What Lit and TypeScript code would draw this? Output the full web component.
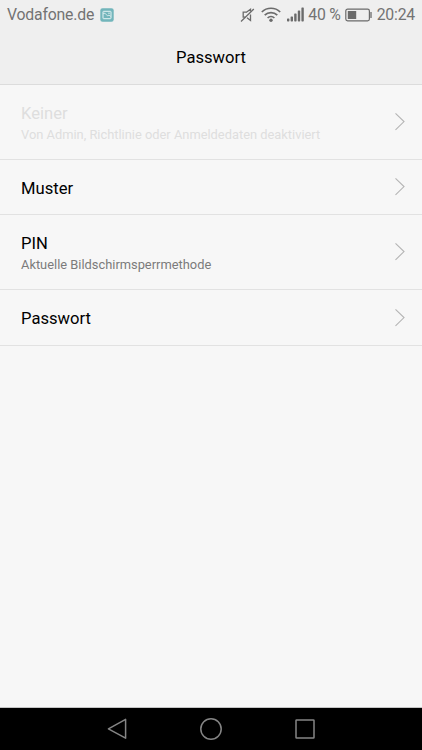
import { LitElement, html, css, svg, nothing } from "lit";
import { customElement, property } from "lit/decorators.js";

@customElement("status-bar")
class StatusBar extends LitElement {
  static styles = css`
    :host { display: flex; height: 29px; align-items: center; padding: 0 7px; box-sizing: border-box; color: #737373; font-size: 15.8px; letter-spacing: -0.2px; line-height: 29px; }
    svg { display: block; flex: none; }
    .shot { margin-left: 6px; }
    .grow { flex: 1; }
    .wifi { margin-left: 6px; }
    .signal { margin-left: 6px; }
    .percent { margin-left: 4px; }
    .battery { margin: 0 5px 0 4px; }
  `;
  render() {
    return html`
      <span>Vodafone.de</span>
      <svg class="shot" width="14" height="14" viewBox="0 0 14 14">
        <rect x=".3" y=".3" width="13.4" height="13.4" rx="2.2" fill="#72b5bb" />
        <rect x="3" y="3.3" width="8" height="7.4" rx=".6" fill="none" stroke="#e4f3f4" stroke-width="1" />
        <path d="M3.2 5.6 5 5.2 7.4 7.8 9 7.2l1.8 1.2" fill="none" stroke="#e4f3f4" stroke-width=".8" />
        <circle cx="9" cy="5.2" r=".7" fill="#e4f3f4" />
      </svg>
      <div class="grow"></div>
      <svg width="15" height="16" viewBox="0 0 15 16" fill="none" stroke="#6b6b6b" stroke-width="1.3">
        <path d="M6.6 5.2H3.2v5h2.2M6 5.5l4.5-3.2v2.2M10.5 7.5v6L7 10.7" />
        <path d="M13.8 2 1 14.5" />
      </svg>
      <svg class="wifi" width="20" height="16" viewBox="0 0 20 16" fill="none" stroke="#6b6b6b" stroke-width="1.7">
        <path d="M.8 5a13.2 13.2 0 0 1 18.4 0M3.7 8.1a9 9 0 0 1 12.6 0M6.6 11a4.9 4.9 0 0 1 6.8 0" />
        <circle cx="10" cy="13.3" r="1.7" fill="#6b6b6b" stroke="none" />
      </svg>
      <svg class="signal" width="17" height="16" viewBox="0 0 17 16" fill="#6b6b6b">
        <rect x="0" y="11.4" width="2.4" height="3" rx=".7" />
        <rect x="3.6" y="9.4" width="2.4" height="5" rx=".7" />
        <rect x="7.2" y="6.4" width="2.4" height="8" rx=".7" />
        <rect x="10.8" y="3.4" width="2.4" height="11" rx=".7" />
        <rect x="14.4" y=".4" width="2.4" height="14" rx=".7" />
      </svg>
      <span class="percent">40 %</span>
      <svg class="battery" width="27" height="14" viewBox="0 0 27 14">
        <rect x=".8" y="1.2" width="23.6" height="11.6" rx="1.8" fill="none" stroke="#6b6b6b" stroke-width="1.2" />
        <rect x="2.8" y="3" width="8.4" height="8" fill="#6b6b6b" />
        <path d="M26 4v6" stroke="#6b6b6b" stroke-width="1.3" />
      </svg>
      <span>20:24</span>
    `;
  }
}

@customElement("setting-row")
class SettingRow extends LitElement {
  @property() label = "";
  @property() note = "";
  @property({ type: Boolean, reflect: true }) disabled = false;
  static styles = css`
    :host { display: flex; align-items: center; justify-content: space-between; height: 55px; box-sizing: border-box; padding: 0 16px 0 21px; border-bottom: 1px solid #e2e2e2; color: #000; }
    :host([note]) { height: 75px; }
    :host([last]) { height: 56px; }
    .label { font-size: 16.6px; line-height: 22px; padding-top: 2px; }
    :host(:not([note])) .label { padding-top: 3px; }
    .note { font-size: 12.87px; line-height: 18px; margin-top: 1px; color: #7b7b7b; }
    :host([disabled]) .label, :host([disabled]) .note { color: #dedede; }
    svg { display: block; flex: none; }
  `;
  render() {
    return html`
      <div>
        <div class="label">${this.label}</div>
        ${this.note ? html`<div class="note">${this.note}</div>` : nothing}
      </div>
      <svg width="12" height="18" viewBox="0 0 12 18"><path d="M1.5 .4 10 8.6 1.5 16.8" fill="none" stroke="#b4b4b4" stroke-width="1.1" /></svg>
    `;
  }
}

const navShapes = [
  svg`<path d="M20.6 2.4v18.8L3.4 11.9z" />`,
  svg`<circle cx="12" cy="12" r="10.2" />`,
  svg`<rect x="3" y="3" width="18" height="18" rx=".6" />`,
];

@customElement("app-root")
class AppRoot extends LitElement {
  static styles = css`
    :host { display: flex; flex-direction: column; height: 750px; background: #f7f7f7; font-family: Roboto, sans-serif; overflow: hidden; }
    .top { height: 85px; box-sizing: border-box; background: #efefef; border-bottom: 1px solid #dcdcdc; flex: none; }
    .title { font-size: 16.6px; line-height: 22px; margin-top: 18px; text-align: center; color: #000; }
    .list { flex: 1; border-bottom: 1px solid #c4c4c4; }
    .nav { height: 42px; flex: none; background: #000; display: flex; justify-content: center; align-items: center; gap: 70px; }
    .nav svg { display: block; fill: none; stroke: #858585; stroke-width: 1.5; stroke-linejoin: round; }
  `;
  render() {
    return html`
      <div class="top">
        <status-bar></status-bar>
        <div class="title">Passwort</div>
      </div>
      <div class="list">
        <setting-row label="Keiner" note="Von Admin, Richtlinie oder Anmeldedaten deaktiviert" disabled></setting-row>
        <setting-row label="Muster"></setting-row>
        <setting-row label="PIN" note="Aktuelle Bildschirmsperrmethode"></setting-row>
        <setting-row label="Passwort" last></setting-row>
      </div>
      <div class="nav">
        ${navShapes.map((shape) => html`<svg width="24" height="24" viewBox="0 0 24 24">${shape}</svg>`)}
      </div>
    `;
  }
}
